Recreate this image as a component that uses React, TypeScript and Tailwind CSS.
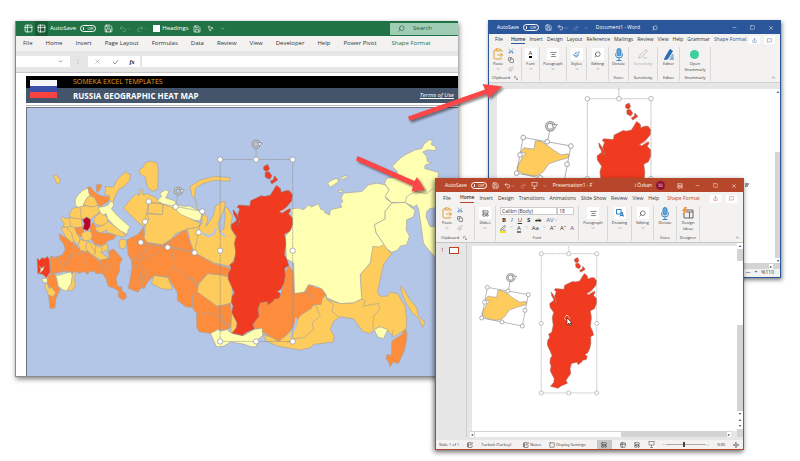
import React from "react";
import {
  AlignCenter,
  ChevronDown,
  ChevronUp,
  ClipboardPaste,
  Copy,
  LayoutTemplate,
  MessageSquare,
  Mic,
  Minus,
  MousePointer2,
  Move,
  NotebookPen,
  Paintbrush,
  PenLine,
  Redo2,
  Save,
  Scissors,
  Search,
  Share,
  Square,
  Table2,
  Undo2,
  X,
} from "lucide-react";

const L = "#ffffb2";
const Y = "#fecc5c";
const O = "#fd8d3c";
const R = "#f03b20";
const D = "#bd0026";
const SEA = "#b4c6e7";

type Region = [string, string];

const west: Region[] = [
  [Y, "97,108 106,105 112,113 118,116 116,130 108,133 103,120"],
  [Y, "145,225 155,205 170,203 190,198 215,200 230,196 238,214 222,228 208,240 205,236 198,232 182,240 150,234"],
  [Y, "120,237 127,230 133,236 150,234 182,238 185,262 155,264 125,262 130,252"],
  [L, "163,178 172,165 185,152 203,143 206,160 212,170 200,172 192,186 188,198 172,203 163,195"],
  [Y, "188,195 196,178 205,168 222,172 232,196 215,202"],
  [O, "200,143 208,141 222,158 240,168 268,172 262,186 238,200 232,194 220,172 206,165"],
  [O, "226,135 242,134 238,150 228,158"],
  [Y, "252,140 278,142 290,118 303,106 316,95 322,102 330,104 326,122 310,140 295,148 285,165 276,190 266,180 266,168 250,163 256,152"],
  [O, "115,282 125,288 145,300 165,315 178,332 200,335 230,360 240,365 250,385 262,398 240,402 225,402 220,394 205,397 200,405 190,395 175,402 165,396 155,398 130,395 110,400 88,404 88,350 100,355 125,345 133,328 128,312 118,300"],
  [Y, "120,265 135,262 150,272 162,302 152,308 135,292"],
  [Y, "136,262 155,260 165,270 178,300 172,315 158,302 152,280"],
  [O, "162,265 186,262 190,280 180,292 168,282"],
  [Y, "182,280 198,273 212,276 216,295 200,304 184,300"],
  [Y, "178,300 200,304 210,318 196,336 178,332 172,315"],
  [O, "205,262 216,248 226,262 228,276 250,280 285,286 280,298 262,303 245,318 222,314 212,300 214,286"],
  [Y, "218,240 228,226 240,218 252,226 262,238 258,252 240,258 224,254"],
  [Y, "222,262 245,258 262,245 290,266 318,286 302,292 280,284 258,278 258,270 240,280 228,274"],
  [L, "233,203 250,200 262,196 270,183 278,190 278,198 272,207 290,228 328,262 322,270 320,284 300,274 280,258 260,236 256,222 246,226 236,214"],
  [Y, "198,304 215,312 235,322 246,316 260,312 262,330 242,338 252,348 267,356 240,362 210,343 195,328"],
  [D, "185,240 198,232 210,240 208,262 200,273 186,268 190,252"],
  [R, "48,355 56,362 62,354 72,356 80,350 86,360 88,398 76,415 66,405 50,402"],
  [L, "55,380 62,386 70,380 66,392 56,400 60,388"],
  [L, "63,418 78,415 80,430 66,428"],
  [O, "80,410 92,402 108,408 110,440 118,450 112,462 104,480 102,506 87,506 84,478 82,462 96,450 80,436"],
  [Y, "70,436 80,432 84,446 92,444 105,460 95,472 80,464 76,450"],
  [L, "100,402 108,408 130,402 150,397 155,410 150,438 138,455 125,450 112,440 106,412"],
  [Y, "155,398 166,402 160,414 164,435 154,455 140,450 152,430"],
  [O, "240,362 267,355 262,335 278,328 305,358 296,375 296,395 286,415 290,440 302,442 305,455 315,462 317,475 306,482 292,470 294,455 278,445 262,440 256,418 245,402 240,382"],
  [Y, "293,305 302,299 314,300 318,312 310,328 298,325"],
];

const centre: Region[] = [
  [Y, "25,90 35,84 45,68 60,64 78,68 83,90 81,148 65,154 50,142 44,112 28,102"],
  [Y, "178,140 210,120 250,110 298,113 298,124 250,122 215,132 195,145 192,176 184,168"],
  [Y, "-22,205 -2,180 16,162 26,168 30,148 36,150 36,165 50,162 72,172 90,188 97,195 96,225 54,222 54,240 40,262 20,246"],
  [O, "-12,300 20,285 37,265 50,310 95,315 120,300 165,268 180,310 190,338 250,372 298,385 300,412 232,402 205,430 200,455 185,470 186,504 165,502 140,482 140,458 110,412 70,408 50,428 40,448 32,442 22,458 -8,446 -4,430 4,385 2,362 -8,345"],
  [Y, "54,190 97,192 97,225 52,220"],
  [Y, "50,222 95,225 98,192 140,205 190,243 210,250 205,262 170,268 135,282 120,300 95,315 50,308 40,295 45,250 54,240"],
  [L, "80,182 92,170 88,160 105,150 115,155 105,174 130,182 140,196 165,200 175,198 212,215 214,236 205,243 190,241 150,224 130,205 95,192"],
  [L, "194,178 199,190 196,205 201,212"],
  [Y, "70,408 112,414 126,450 95,448 62,432"],
  [O, "186,470 200,456 260,500 300,492 306,560 285,572 262,570 240,582 205,577 198,560 198,520 188,510"],
  [Y, "232,402 250,405 270,406 295,412 306,440 304,490 280,496 260,500 200,457 204,434"],
  [Y, "170,268 205,262 215,250 214,232 222,222 232,235 226,260 236,246 248,228 255,200 272,186 284,186 282,205 270,235 262,250 268,278 280,268 284,230 282,205 290,203 306,228 300,262 316,290 316,350 298,380 250,370 190,338 180,310"],
  [Y, "304,518 322,550 315,584 300,578"],
  [O, "460,430 464,400 475,378 488,395 492,462 520,458 540,462 545,505 510,528 490,560 470,585 445,606 400,580 366,560 383,530 383,490 415,485 450,470"],
  [L, "240,582 262,570 270,575 290,570 298,578 310,584 340,588 370,570 395,566 397,588 382,600 378,622 362,622 340,614 300,608 280,620 258,622 250,605"],
];

const east: Region[] = [
  [Y, "282,340 290,358 305,372 290,390 280,405 272,440 262,488 270,500 290,500 300,488 322,492 345,530 350,570 348,600 310,622 290,600 268,592 250,604 238,612 218,606 190,568 150,562 130,575 120,600 132,620 128,638 70,645 60,655 30,662 -40,650 -72,635 -82,616 -35,630 10,590 30,545 52,520 100,480 110,510 150,522 190,520 213,508 210,435 240,400 240,350"],
  [O, "0,493 18,495 35,488 45,490 50,470 65,466 75,475 92,472 107,495 95,508 92,525 75,525 65,530 30,540 5,548"],
  [L, "2,237 25,235 40,240 55,225 62,232 85,222 92,240 98,238 105,250 118,256 120,240 155,232 150,222 158,215 152,205 160,190 215,185 235,165 260,160 285,165 297,180 286,205 305,220 285,245 285,268 253,285 258,310 275,335 282,345 265,352 248,350 240,400 210,435 213,490 215,508 190,520 150,522 110,505 107,495 95,478 75,470 55,465 40,490 12,493 10,400 -12,388 -15,320 4,295"],
  [L, "283,160 290,145 318,142 322,125 306,110 330,85 350,72 375,60 395,56 402,42 417,30 427,30 424,44 437,50 437,62 412,60 398,66 410,80 412,95 425,98 405,106 404,116 425,122 446,128 444,140 450,160 450,400 415,360 400,340 395,300 386,240 380,225 372,232 345,218 305,218 285,200 297,180"],
  [L, "305,220 345,218 375,242 370,262 350,270 348,300 358,320 350,345 330,350 322,362 305,368 290,358 282,345 258,310 253,285 285,268 285,245"],
  [L, "252,600 270,592 293,600 280,628 262,622"],
  [O, "345,598 350,608 350,630 342,665 325,702 308,698 300,713 296,700 288,688 290,675 304,678 305,635 320,625 335,615"],
  [Y, "330,468 342,480 358,508 380,535 385,560 405,578 397,594 388,570 365,548 345,515 335,490"],
  [L, "112,160 122,152 140,145 145,155 130,166 118,172"],
  [L, "150,145 168,136 172,142 152,150"],
  [L, "145,183 158,180 154,188 146,188"],
  [SEA, "410,245 420,236 450,234 450,290 420,290 408,262"],
  [SEA, "-30,628 10,590 12,560 22,562 18,590 -18,622"],
];

const borders = [
  "M0 360l40 -25l45 -22M5 360l30 2l40 -20l35 -30M5 370l30 15l20 20M35 385l-10 30l20 10M50 310l-10 30l-10 20M120 305l5 40l5 35l-20 32",
  "M130 382l70 50M165 420l20 -5l5 20l12 5M60 410l-20 5l-10 35M120 302l-30 18M120 320l70 18M-10 400l30 -25M10 440l12 -25l25 -10",
  "M195 525l40 -5l30 10l25 30M260 500l15 30l10 30M290 570l12 -40",
];

const bodyPath =
  "M325 196L358 199L361 183L392 168L402 170L420 166L430 150L438 137L450 146L452 158L466 153L477 153L486 165L484 183L468 202L450 216L454 221L478 206L480 212L474 222L486 235L486 255L478 275L462 283L466 310L462 345L470 362L475 378L463 385L464 410L460 430L452 448L440 456L450 462L446 475L432 478L428 484L414 495L410 485L388 490L382 510L385 530L376 542L366 556L372 568L348 578L335 588L305 580L318 565L320 550L312 535L304 518L308 500L303 488L305 470L312 460L303 440L293 418L294 400L302 388L298 375L310 368L316 340L312 310L318 290L304 270L302 255L315 245L328 250L322 225L328 208L320 202Z";

// Outline shared by the sheet, the document and the slide
const Krasnoyarsk = () => (
  <g fill={R} stroke="#a66a5c" strokeWidth="2">
    <path d={bodyPath} strokeLinejoin="round" />
    <path d="M308 210L316 220L326 238L325 256L316 254L318 238L310 224Z" />
    <path d="M400 80L412 74L417 86L410 95L400 90ZM404 98L416 96L424 108L418 118L405 112ZM420 124L430 119L432 108L442 120L432 127L424 132Z" />
    <path d="M448 216L478 204" stroke="#e8c4b8" strokeWidth="3" />
  </g>
);

const Handle = ({ x, y, r = 6 }: { x: number; y: number; r?: number }) => (
  <circle cx={x} cy={y} r={r} fill="#fff" stroke="#8c8c8c" strokeWidth="2" />
);

const RotateHandle = ({ x, y }: { x: number; y: number }) => (
  <g fill="none" stroke="#7c7c7c">
    <circle cx={x} cy={y} r="10" stroke="#868686" strokeWidth="7" />
    <circle cx={x} cy={y} r="10" stroke="#fff" strokeWidth="2" />
    <path d={`M${x + 4} ${y - 4}h14l-7 9z`} fill="#fff" strokeWidth="2" />
  </g>
);

const TallFrame = () => (
  <g>
    <path d="M269 59H487V606H269ZM377 59V20" fill="none" stroke="#8c8c8c" strokeWidth="2" strokeDasharray="5 2" />
    {[269, 377, 487].map((x) => (
      <React.Fragment key={x}>
        <Handle x={x} y={59} r={8} />
        {x !== 377 && <Handle x={x} y={333} r={8} />}
        <Handle x={x} y={606} r={8} />
      </React.Fragment>
    ))}
    <RotateHandle x={377} y={13} />
  </g>
);

const Komi = () => (
  <g>
    <path
      d="M38 197L36 189L52 160L60 153L46 150L54 138L62 140L80 142L84 120L102 124L132 146L150 157L168 154L170 162L165 165L140 172L118 180L104 200L92 209L78 211L52 206Z"
      fill={Y}
      stroke="#a9a29c"
      strokeWidth="2"
    />
    <path d="M52 112L175 134L157 228L35 204ZM114 123L121 93" fill="none" stroke="#999" strokeWidth="2" />
    <Handle x={52} y={112} />
    <Handle x={114} y={123} />
    <Handle x={175} y={134} />
    <Handle x={165} y={181} />
    <Handle x={157} y={228} />
    <Handle x={96} y={216} />
    <Handle x={35} y={204} />
    <Handle x={44} y={157} />
    <RotateHandle x={122} y={83} />
  </g>
);

const Regions = ({ items }: { items: Region[] }) => (
  <g stroke="#a9a29c" strokeWidth="2" strokeLinejoin="round">
    {items.map(([fill, points]) => (
      <polygon key={points} points={points} fill={fill} />
    ))}
  </g>
);

const HeatMap = () => (
  <svg viewBox="26 108 432 269" preserveAspectRatio="xMinYMin slice" className="block w-full" role="img" aria-label="Russia map">
    <rect x="26" y="108" width="432" height="269" fill={SEA} />
    <g transform="translate(20 140) scale(.3333)">
      <Regions items={west} />
      <path
        d="M88 350L110 352L125 380L150 345L188 340L190 375M150 345L145 368L128 378L126 395M188 340L200 335M238 365L235 392M240 385L275 370M245 400L278 380M178 205L182 240M145 234L150 262M165 315L150 325M225 318L222 345M245 318L240 340M210 318L225 340"
        fill="none"
        stroke="#a9a29c"
        strokeWidth="2"
      />
    </g>
    <g transform="translate(290 130) scale(.3333)">
      <Regions items={east} />
      <path
        d="M75 525L90 560L65 580L70 600L40 625L10 628L-10 640M110 510L130 525L125 545L145 562M213 508L225 515L218 530L245 525L265 522L268 540L250 560L248 600M305 625L310 600M345 218L350 200L375 185L410 192L430 175"
        fill="none"
        stroke="#a9a29c"
        strokeWidth="2"
      />
    </g>
    <g transform="translate(130 140) scale(.3333)">
      <Regions items={centre} />
      {borders.map((d) => (
        <path key={d} d={d} fill="none" stroke="#a9a29c" strokeWidth="2" />
      ))}
      <path d="M216 280L235 290L252 280L256 265M268 278L285 290M480 595L495 560L498 535" fill="none" stroke={SEA} strokeWidth="7" />
      <Krasnoyarsk />
      <TallFrame />
      <path d="M54 185L215 215L192 339L30 308ZM135 200L142 160" fill="none" stroke="#a9a29c" strokeWidth="2" />
      <Handle x={54} y={185} r={8} />
      <Handle x={135} y={201} r={8} />
      <Handle x={215} y={215} r={8} />
      <Handle x={204} y={278} r={8} />
      <Handle x={192} y={339} r={8} />
      <Handle x={111} y={323} r={8} />
      <Handle x={30} y={308} r={8} />
      <Handle x={43} y={246} r={8} />
      <RotateHandle x={143} y={154} />
    </g>
  </svg>
);

const AutoSave = () => (
  <label className="flex items-center gap-1 whitespace-nowrap">
    AutoSave
    <span className="relative flex">
      <input type="checkbox" role="switch" className="h-[7px] w-[16px] appearance-none rounded-full border border-white" />
      <span className="pointer-events-none absolute inset-0 flex items-center gap-[3px] px-[3px] text-[4px] leading-none">
        <span className="size-[3px] rounded-full bg-white" />
        Off
      </span>
    </span>
  </label>
);

type IconButtonProps = { label: string; className?: string; children: React.ReactNode };

const IconButton = ({ label, className = "", children }: IconButtonProps) => (
  <button aria-label={label} className={`flex shrink-0 items-center justify-center ${className}`}>
    {children}
  </button>
);

const Tabs = ({ items, active, className }: { items: string[]; active: string; className: string }) => (
  <div className={`flex items-center whitespace-nowrap text-[#333] ${className}`}>
    {items.map((item) => (
      <button
        key={item}
        className={item === "Shape Format" ? active : item === "Home" ? "home-tab" : ""}
      >
        {item}
      </button>
    ))}
  </div>
);

const Tile = ({ label, width, children }: { label: string; width: string; children: React.ReactNode }) => (
  <button className={`flex flex-col items-center border-r border-[#d8d8d8] pt-px ${width}`}>
    <span className="flex size-[12px] items-center justify-center bg-white">{children}</span>
    <span className="mt-px leading-[6px]">{label}</span>
    <ChevronDown size={4} />
  </button>
);

const BigTool = ({
  label,
  group,
  width,
  children,
}: {
  label: React.ReactNode;
  group: string;
  width: string;
  children: React.ReactNode;
}) => (
  <div className={`flex flex-col items-center border-r border-[#d8d8d8] pt-px ${width}`}>
    <button className="flex flex-1 flex-col items-center">
      <span className="flex size-[12px] items-center justify-center">{children}</span>
      <span className="mt-px leading-[6px]">{label}</span>
    </button>
    <span className="leading-[6px]">{group}</span>
  </div>
);

const Clipboard = ({ width }: { width: string }) => (
  <div className={`flex flex-col border-r border-[#d8d8d8] pt-px ${width}`}>
    <div className="flex flex-1 gap-1">
      <button className="flex flex-col items-center">
        <ClipboardPaste size={12} color="#e0a030" strokeWidth={2} />
        <span className="mt-px leading-[6px]">Paste</span>
        <ChevronDown size={4} />
      </button>
      <div className="flex flex-col gap-[3px]">
        <IconButton label="Cut"><Scissors size={6} color="#2f7cc0" className="-rotate-90" /></IconButton>
        <IconButton label="Copy"><Copy size={6} /></IconButton>
        <IconButton label="Format painter"><Paintbrush size={6} color="#aaa" /></IconButton>
      </div>
    </div>
    <span className="flex items-center gap-1 leading-[6px]">
      Clipboard
      <svg width="4" height="4" viewBox="0 0 8 8" fill="none" stroke="#666"><path d="M1 5V1h4M3 3l4 4M7 4v3H4" /></svg>
    </span>
  </div>
);

const DictateIcon = () => (
  <svg width="12" height="13" viewBox="0 0 24 26" fill="none" stroke="#3d86c6" strokeWidth="2">
    <rect x="8" y="1" width="8" height="15" rx="4" fill="#5ea7dc" />
    <path d="M5 11v2a7 7 0 0 0 14 0v-2M12 20v5M7 25h10" />
  </svg>
);

const PaperPencilIcon = ({ color }: { color: string }) => (
  <svg width="12" height="12" viewBox="0 0 24 24" fill="none" stroke={color} strokeWidth="2">
    <path d="M4 20L14 3l5 3L9 22l-6 1z" fill={color} />
    <path d="M13 22h9M15 18h6M17 14h4" />
  </svg>
);

const WindowButtons = () => (
  <div className="flex items-center gap-[13px]">
    <IconButton label="Minimize"><Minus size={5} /></IconButton>
    <IconButton label="Restore"><Square size={5} /></IconButton>
    <IconButton label="Close"><X size={6} /></IconButton>
  </div>
);

const ExcelWindow = () => (
  <section className="absolute left-[15px] top-[21px] w-[443px] border-b border-l border-[#8a8a8a] bg-white text-[6px] shadow-[1px_2px_5px_rgba(0,0,0,0.5)]">
    <header className="flex h-[15px] items-center bg-[#217346] pl-2 text-white">
      <IconButton label="Sheet"><Table2 size={9} /></IconButton>
      <IconButton label="Pivot" className="ml-[2px] mr-[2px] h-[15px] w-[13px] bg-[#185c37]"><Table2 size={9} /></IconButton>
      <AutoSave />
      <div className="ml-2 flex items-center gap-[5px]">
        <IconButton label="Save"><Save size={9} /></IconButton>
        <IconButton label="Undo" className="ml-px opacity-35"><Undo2 size={8} /><ChevronDown size={4} /></IconButton>
        <IconButton label="Redo" className="opacity-35"><Redo2 size={8} /><ChevronDown size={4} /></IconButton>
      </div>
      <label className="ml-[5px] flex items-center gap-[2px]">
        <input type="checkbox" className="size-[7px] appearance-none bg-white" />
        Headings
      </label>
      <div className="ml-[5px] flex items-center gap-[6px]">
        <IconButton label="Save copy"><Save size={8} /></IconButton>
        <IconButton label="Select"><MousePointer2 size={7} /></IconButton>
        <IconButton label="More"><ChevronDown size={5} /></IconButton>
      </div>
      <label className="ml-auto flex h-[12px] w-[68px] items-center gap-2 bg-[#9fcdb3] pl-2 text-[#1f5c3a]">
        <Search size={7} className="-scale-x-100" />
        <input placeholder="Search" aria-label="Search" className="w-8 bg-transparent placeholder:text-[#1f5c3a]" />
      </label>
    </header>
    <Tabs
      items={["File", "Home", "Insert", "Page Layout", "Formulas", "Data", "Review", "View", "Developer", "Help", "Power Pivot", "Shape Format"]}
      active="ml-[2px] text-[#217346]"
      className="h-[15px] gap-[13px] bg-[#f3f2f1] pl-[7px]"
    />
    <div className="flex h-[22px] items-center gap-2 border-b border-[#c8c8c8] bg-[#e6e6e6]">
      <select aria-label="Name box" className="h-[11px] w-[54px] appearance-none bg-white" />
      <ChevronDown size={5} className="-ml-5" />
      <span className="ml-1 text-[#999]">⋮</span>
      <div className="-ml-px flex h-[11px] w-[52px] items-center justify-around bg-white">
        <IconButton label="Cancel"><X size={7} color="#999" /></IconButton>
        <svg width="7" height="6" viewBox="0 0 7 6" fill="none" stroke="#999"><path d="M1 3l2 2l3-4" /></svg>
        <i className="font-['Liberation_Serif'] font-bold leading-none">fx</i>
      </div>
      <input aria-label="Formula" className="-ml-[6px] h-[11px] min-w-0 flex-1 bg-white" />
    </div>
    <div className="pl-[10px] pt-[3px]">
      <div className="relative text-white">
        <p className="h-[12px] bg-black pl-[47px] text-[7px] leading-[12px] text-[#e0a21a]">SOMEKA EXCEL TEMPLATES</p>
        <div className="flex h-[15px] items-center justify-between bg-[#44546a] pl-[47px] pr-1">
          <h1 className="text-[8px] font-bold">RUSSIA GEOGRAPHIC HEAT MAP</h1>
          <a href="#terms" className="italic underline">Terms of Use</a>
        </div>
        <div className="absolute left-[4px] top-[4px] flex h-[18px] w-[27px] flex-col">
          <span className="flex-1 bg-[#f6f6fa]" />
          <span className="flex-1 bg-[#3d4fa8]" />
          <span className="flex-1 bg-[#f8423f]" />
        </div>
      </div>
      <div className="h-[3px] border-b border-[#bbb]" />
      <div className="mt-px border-l border-t border-[#6f7480]">
        <HeatMap />
      </div>
    </div>
  </section>
);

const WordWindow = () => (
  <section className="absolute left-[488px] top-[20px] flex h-[258px] w-[293px] flex-col border border-[#2b579a] bg-[#e6e6e6] text-[4px] text-[#333] shadow-[1px_2px_4px_rgba(0,0,0,0.5)]">
    <header className="flex h-[13px] shrink-0 items-center bg-[#2b579a] pl-2 pr-[6px] text-[5px] text-white">
      <AutoSave />
      <div className="ml-[6px] flex items-center gap-[5px]">
        <IconButton label="Save"><Save size={7} /></IconButton>
        <IconButton label="Undo"><Undo2 size={7} /><ChevronDown size={4} /></IconButton>
        <IconButton label="Redo" className="opacity-40"><Redo2 size={6} /></IconButton>
        <IconButton label="More"><ChevronDown size={4} /></IconButton>
      </div>
      <span className="ml-2 whitespace-nowrap">Document1 - Word</span>
      <IconButton label="Search" className="ml-3"><Search size={6} className="-scale-x-100" /></IconButton>
      <div className="ml-auto"><WindowButtons /></div>
    </header>
    <div className="flex h-[12px] shrink-0 items-center justify-between bg-[#f3f2f1] pl-[6px] pr-[5px] text-[5px]">
      <Tabs
        items={["File", "Home", "Insert", "Design", "Layout", "Reference", "Mailings", "Review", "View", "Help", "Grammar", "Shape Format"]}
        active="text-[#2b579a]"
        className="gap-1 [&_.home-tab]:ml-1 [&_.home-tab]:border-b [&_.home-tab]:border-[#2b579a] [&_.home-tab]:font-semibold"
      />
      <div className="flex gap-[4px] text-[#2b579a]">
        <IconButton label="Share" className="h-[8px] w-[11px] bg-white"><Share size={5} /></IconButton>
        <IconButton label="Comments" className="h-[8px] w-[11px] bg-white"><MessageSquare size={5} /></IconButton>
      </div>
    </div>
    <div className="flex h-[37px] shrink-0 border-b border-[#d0d0d0] bg-[#f3f2f1] py-px pl-[3px]">
      <Clipboard width="w-[30px]" />
      <Tile label="Font" width="w-[18px]"><span className="border-b-2 border-black text-[6px] leading-[6px]">A</span></Tile>
      <Tile label="Paragraph" width="w-[27px]"><AlignCenter size={7} /></Tile>
      <Tile label="Styles" width="w-[20px]"><Paintbrush size={7} color="#2f6fb0" /></Tile>
      <Tile label="Editing" width="w-[22px]"><Search size={7} className="-scale-x-100" /></Tile>
      <BigTool label="Dictate" group="Voice" width="w-[20px]"><DictateIcon /></BigTool>
      <BigTool label={<span className="text-[#aaa]">Sensitivity</span>} group="Sensitivity" width="w-[29px]">
        <PenLine size={10} color="#bbb" />
      </BigTool>
      <BigTool label="Editor" group="Editor" width="w-[22px]"><PaperPencilIcon color="#2b6cb8" /></BigTool>
      <BigTool label={<>Open<br />Grammarly</>} group="Grammarly" width="w-[31px]">
        <span className="size-[9px] rounded-full bg-[#3ecf9f]" />
      </BigTool>
      <ChevronUp size={5} className="mb-px ml-auto mr-1 self-end" />
    </div>
    <div className="flex min-h-0 flex-1 pt-[6px]">
      <div className="flex min-w-0 flex-1 flex-col pl-2">
        <div className="min-h-0 flex-1 bg-white">
          <svg viewBox="497 89 278 174" preserveAspectRatio="xMinYMin slice" className="block h-full w-full">
            <g transform="translate(508.8 81.5) scale(.292)">
              <Krasnoyarsk />
              <TallFrame />
            </g>
            <g transform="translate(503 94) scale(.388)">
              <Komi />
            </g>
            <path d="M745 184h4M745 186h3" stroke="#333" strokeWidth="1" />
          </svg>
        </div>
        <div className="flex h-[6px] items-center justify-end bg-[#d4d4d4] pr-[2px]">
          <span className="bg-white px-px leading-[5px]">▸</span>
        </div>
      </div>
      <div className="flex w-[5px] flex-col items-center bg-[#d4d4d4] leading-[5px]">
        <span className="w-full bg-white text-center">▴</span>
        <span className="h-[58px] w-full bg-white" />
        <span className="mb-[6px] mt-auto w-full bg-white text-center">▾</span>
      </div>
    </div>
    <footer className="flex h-[8px] shrink-0 items-center justify-end gap-1 bg-[#f3f2f1] pr-[6px] text-[5px]">
      <span>—</span>
      <span>+</span>
      <span>%110</span>
    </footer>
  </section>
);

const PowerPointWindow = () => (
  <section className="absolute left-[435px] top-[178px] flex h-[272px] w-[309px] flex-col border border-[#b7472a] bg-[#e6e6e6] text-[4px] text-[#333] shadow-[-1px_2px_5px_rgba(0,0,0,0.6)]">
    <header className="flex h-[13px] shrink-0 items-center bg-[#b7472a] pl-[9px] pr-[6px] text-[5px] text-white">
      <AutoSave />
      <div className="ml-[5px] flex items-center gap-[5px]">
        <IconButton label="Save"><Save size={7} /></IconButton>
        <IconButton label="Undo"><Undo2 size={7} /><ChevronDown size={4} /></IconButton>
        <IconButton label="Redo" className="opacity-50"><Redo2 size={6} /></IconButton>
        <IconButton label="Start slide show">
          <svg width="7" height="7" viewBox="0 0 14 14" fill="none" stroke="#fff"><path d="M1 1h12M2 1v7h10V1M7 8v5M4 13h6" /></svg>
        </IconButton>
        <IconButton label="More"><ChevronDown size={4} /></IconButton>
      </div>
      <span className="ml-[6px] whitespace-nowrap">Presentation1 - F</span>
      <span className="ml-auto whitespace-nowrap">i Özkan</span>
      <span className="ml-1 flex size-[9px] items-center justify-center rounded-full bg-[#8e1230] text-[4px]">İÖ</span>
      <IconButton label="Display options" className="ml-3 mr-3"><LayoutTemplate size={6} /></IconButton>
      <WindowButtons />
    </header>
    <div className="flex h-[13px] shrink-0 items-center justify-between bg-[#f3f2f1] pl-[7px] pr-[6px] text-[5px]">
      <Tabs
        items={["File", "Home", "Insert", "Design", "Transitions", "Animations", "Slide Show", "Review", "View", "Help", "Shape Format"]}
        active="ml-[3px] text-[#c43e1c]"
        className="gap-[5px] [&_.home-tab]:ml-1 [&_.home-tab]:border-b [&_.home-tab]:border-[#b7472a] [&_.home-tab]:font-semibold"
      />
      <div className="flex gap-[5px] text-[#c43e1c]">
        <IconButton label="Share" className="h-[8px] w-[11px] bg-white"><Share size={5} /></IconButton>
        <IconButton label="Comments" className="h-[8px] w-[11px] bg-white"><MessageSquare size={5} /></IconButton>
      </div>
    </div>
    <div className="flex h-[38px] shrink-0 border-b border-[#c6c6c6] bg-[#f3f2f1] py-px pl-[5px]">
      <Clipboard width="w-[34px]" />
      <Tile label="Slides" width="w-[21px]"><LayoutTemplate size={7} /></Tile>
      <div className="flex w-[83px] flex-col border-r border-[#d8d8d8] px-1 pt-px">
        <div className="flex">
          <select aria-label="Font name" className="h-[8px] w-[58px] appearance-none border border-[#ccc] bg-white px-px text-[5px] leading-none">
            <option>Calibri (Body)</option>
          </select>
          <select aria-label="Font size" className="h-[8px] w-[17px] appearance-none border border-[#ccc] bg-white px-px text-[5px] leading-none">
            <option>18</option>
          </select>
        </div>
        <div className="mt-px flex items-center gap-[5px] pl-[2px] text-[6px] leading-[8px]">
          <button className="font-bold">B</button>
          <button className="italic">I</button>
          <button className="underline">U</button>
          <button className="font-bold">S</button>
          <button className="text-[5px] line-through">ab</button>
          <button className="flex items-center text-[#3a74b0]">AV<ChevronDown size={4} /></button>
        </div>
        <div className="mt-px flex flex-1 items-start gap-1 text-[6px] leading-[7px]">
          <IconButton label="Highlight" className="border-b-2 border-[#f5e11a]"><PenLine size={6} /></IconButton>
          <ChevronDown size={4} />
          <button className="border-b-2 border-[#777] leading-[6px]">A</button>
          <ChevronDown size={4} />
          <button>Aa</button>
          <ChevronDown size={4} />
          <button>Aˆ</button>
          <button>Aˇ</button>
          <button className="text-[#7a4a8a]">A</button>
        </div>
        <span className="text-center leading-[6px]">Font</span>
      </div>
      <Tile label="Paragraph" width="w-[29px]"><AlignCenter size={7} /></Tile>
      <Tile label="Drawing" width="w-[24px]">
        <svg width="8" height="8" viewBox="0 0 16 16" fill="none" stroke="#2f7cc0" strokeWidth="2"><path d="M1 1h9v9H1zM8 15l4-9l3 9M9 13h5" /></svg>
      </Tile>
      <Tile label="Editing" width="w-[22px]"><Search size={7} className="-scale-x-100" /></Tile>
      <BigTool label="Dictate" group="Voice" width="w-[23px]"><DictateIcon /></BigTool>
      <BigTool label={<>Design<br />Ideas</>} group="Designer" width="w-[23px]">
        <svg width="12" height="12" viewBox="0 0 24 24" fill="none" stroke="#666" strokeWidth="2">
          <path d="M8 6h14v16H4V12M8 10h14M15 10v12" />
          <path d="M6 0L1 8h4l-3 7l8-9H6l3-6z" fill="#f59a2f" stroke="#e8762c" strokeWidth="1" />
        </svg>
      </BigTool>
      <ChevronUp size={5} className="mb-px ml-auto mr-[3px] self-end" />
    </div>
    <div className="flex min-h-0 flex-1">
      <aside className="flex w-[31px] gap-[5px] border-r border-[#cfcfcf] pl-[5px] pt-[4px] text-[5px] leading-[7px] text-[#c43e1c]">
        1
        <span className="h-[7px] w-[10px] border border-[#c43e1c] bg-white" />
      </aside>
      <div className="flex min-w-0 flex-1 flex-col">
        <div className="ml-[5px] mt-[3px] min-h-0 flex-1 bg-white">
          <svg viewBox="472 246 265 185" preserveAspectRatio="xMinYMin slice" className="block h-full w-full">
            <g transform="translate(472.8 238.7) scale(.2545)">
              <Krasnoyarsk />
              <TallFrame />
            </g>
            <g transform="translate(470 250) scale(.3333)">
              <Komi />
            </g>
            <path d="M567 315l3 3l-3 3l-3-3z" fill="none" stroke="#fff" strokeWidth="1" strokeDasharray="1 1" />
            <path d="M567 318v7l2-2l1 3l1-1l-1-2h2z" fill="#fff" stroke="#222" strokeWidth=".6" />
          </svg>
        </div>
        <div className="ml-[3px] mr-[6px] flex h-[6px] items-center bg-[#d4d4d4] leading-[5px]">
          <span className="bg-white px-px">◂</span>
          <span className="ml-px h-[5px] w-[56%] bg-white" />
          <span className="ml-auto bg-white px-px">▸</span>
        </div>
      </div>
      <div className="flex w-[6px] flex-col items-center bg-[#d4d4d4] text-center leading-[6px]">
        <span className="w-full bg-white">▴</span>
        <span className="mt-[12px] h-[64px] w-full bg-white" />
        <span className="mb-[8px] mt-auto w-full bg-white">▾<br />▴<br />▾</span>
      </div>
    </div>
    <footer className="mt-[3px] flex h-[9px] shrink-0 items-center whitespace-nowrap bg-[#f3f2f1] pl-[3px] pr-1">
      <span>Slide 1 of 1</span>
      <NotebookPen size={6} className="ml-2" />
      <span className="ml-2">Turkish (Turkey)</span>
      <button className="ml-3 flex items-center gap-px"><NotebookPen size={6} />Notes</button>
      <button className="ml-2 flex items-center gap-px"><Square size={6} />Display Settings</button>
      <div className="ml-auto flex items-center gap-2">
        <IconButton label="Normal" className="h-[9px] w-[15px] bg-[#c6c6c6]"><LayoutTemplate size={6} /></IconButton>
        <IconButton label="Slide sorter"><Table2 size={6} /></IconButton>
        <IconButton label="Reading view"><LayoutTemplate size={6} /></IconButton>
        <IconButton label="Slide show">
          <svg width="7" height="7" viewBox="0 0 14 14" fill="none" stroke="#444"><path d="M1 1h12M2 1v7h10V1M7 8v5M4 13h6" /></svg>
        </IconButton>
        <label className="flex items-center gap-px">
          −
          <input
            type="range"
            aria-label="Zoom"
            defaultValue={45}
            className="h-px w-[40px] appearance-none bg-[#aaa] [&::-webkit-slider-thumb]:h-[5px] [&::-webkit-slider-thumb]:w-[2px] [&::-webkit-slider-thumb]:appearance-none [&::-webkit-slider-thumb]:bg-[#444]"
          />
          +
        </label>
        <span>%90</span>
        <IconButton label="Fit"><Move size={6} /></IconButton>
      </div>
    </footer>
  </section>
);

const Arrows = () => (
  <svg
    viewBox="0 0 800 461"
    className="pointer-events-none absolute left-0 top-0 w-[800px] drop-shadow-[2px_2px_1px_rgba(0,0,0,0.45)]"
    fill="#fb4748"
  >
    <path d="M408 116.500L485 89.500L482.500 84L502.500 86.500L488.500 98L486.500 94L409.500 121Z" />
    <path d="M357.500 156L414.500 181L417 177L425 190L411.500 191.500L413 186L356 160.500Z" />
  </svg>
);

const App = () => (
  <main className="relative min-h-screen w-full overflow-hidden bg-white font-['Open_Sans',sans-serif]">
    <ExcelWindow />
    <WordWindow />
    <PowerPointWindow />
    <Arrows />
  </main>
);

export default App;
